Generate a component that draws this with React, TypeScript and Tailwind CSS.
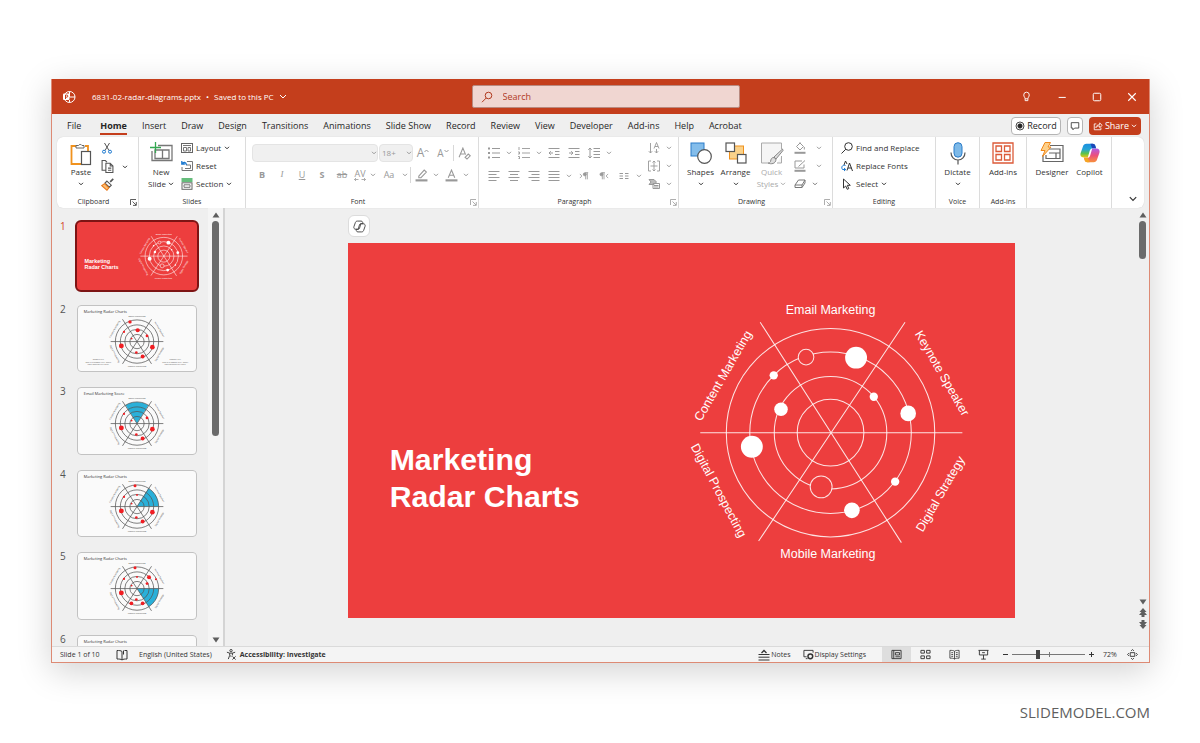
import { useState } from "react";
import type { ReactNode } from "react";

const tabs = [
    "File", "Home", "Insert", "Draw", "Design", "Transitions", "Animations", "Slide Show",
    "Record", "Review", "View", "Developer", "Add-ins", "Help", "Acrobat",
];

type Dot = [number, number, number];

// dots are relative to the centre of the radar
const leftDots: Dot[] = [[-139, -103, 12], [-57, -32, 9], [-167, 46, 26], [-7, 117, 14]];
const thumbs: { title: string; dots: Dot[]; sector?: [number, number]; notes?: boolean }[] = [
    {
        title: "Marketing Radar Charts",
        dots: [...leftDots, [-75, -210, 18], [7, -121, 22], [107, -60, 15], [164, 60, 25], [60, 160, 21]],
        notes: true,
    },
    {
        title: "Email Marketing Score",
        dots: [...leftDots, [107, -60, 15], [164, 60, 25], [60, 160, 21]],
        sector: [-122, -58],
    },
    {
        title: "Marketing Radar Charts",
        dots: [...leftDots, [-21, -222, 16], [0, -124, 10], [164, 60, 25], [60, 160, 21]],
        sector: [-58, 0],
    },
    {
        title: "Marketing Radar Charts",
        dots: [...leftDots, [-21, -222, 16], [0, -124, 10], [128, -121, 21], [202, -100, 11], [107, -53, 15], [-60, 157, 20], [60, 157, 20]],
        sector: [0, 57],
    },
    { title: "Marketing Radar Charts", dots: leftDots },
];

function Icon({ size = 12, w, h, box, className = "", children }: { size?: number; w?: number; h?: number; box?: string; className?: string; children: ReactNode }) {
    return (
        <svg width={w ?? size} height={h ?? size} viewBox={box ?? "0 0 12 12"} fill="none" stroke="currentColor" strokeWidth="1" className={`shrink-0 ${className}`} aria-hidden="true">
            {children}
        </svg>
    );
}

function Chevron({ className = "" }: { className?: string }) {
    return (
        <Icon w={6} h={4} box="0 0 6 4" className={className}>
            <path d="M1 .8 3 2.8 5 .8" />
        </Icon>
    );
}

function Launcher() {
    return (
        <Icon size={7} box="0 0 7 7">
            <path d="M.5 6V.5H6M2.5 2.5l3.5 3.5M6.3 3v3.4H3" strokeWidth=".8" />
        </Icon>
    );
}

function Group({ label, width, launcher, muted, children }: { label: string; width: string; launcher?: boolean; muted?: boolean; children?: ReactNode }) {
    return (
        <section className={`${width} flex shrink-0 flex-col border-r border-[#dcdcdc]`} aria-label={label || "Designer"}>
            <div className="flex flex-1">{children}</div>
            <div className="flex h-3 items-center text-center text-[7px] leading-3 text-[#333]">
                <span className="flex-1">{label}</span>
                {launcher && (
                    <button aria-label={`${label} settings`} className={`w-2 ${muted ? "text-[#999]" : "text-[#333]"}`}>
                        <Launcher />
                    </button>
                )}
            </div>
        </section>
    );
}

function BigButton({ icon, lines, width, chevron, inlineChevron, muted }: { icon: ReactNode; lines: string[]; width: string; chevron?: boolean; inlineChevron?: boolean; muted?: boolean }) {
    return (
        <button disabled={muted} className={`${width} flex shrink-0 flex-col items-center pt-[5px] text-[8px] leading-3 ${muted ? "text-[#aaa]" : "text-[#333]"}`}>
            <span className="flex h-6 items-start justify-center">{icon}</span>
            {lines.map((line, i) => (
                <span key={line} className="flex items-center gap-0.5 whitespace-nowrap">
                    {line}
                    {inlineChevron && i === lines.length - 1 && <Chevron />}
                </span>
            ))}
            {chevron && <Chevron className="mt-1" />}
        </button>
    );
}

function SmallButton({ icon, label, chevron }: { icon: ReactNode; label: string; chevron?: boolean }) {
    return (
        <button className="flex h-[18px] items-center gap-[3px] whitespace-nowrap text-[8px] text-[#333]">
            <span className="flex w-3 justify-center">{icon}</span>
            {label}
            {chevron && <Chevron />}
        </button>
    );
}

function Tool({ label, width = "w-5", children }: { label: string; width?: string; children: ReactNode }) {
    return (
        <button aria-label={label} className={`${width} flex h-[18px] shrink-0 items-center justify-center`}>
            {children}
        </button>
    );
}

function More({ label }: { label: string }) {
    return (
        <button aria-label={`${label} options`} className="flex h-[18px] w-2.5 shrink-0 items-center justify-center">
            <Chevron />
        </button>
    );
}

function Lines({ d }: { d: string }) {
    return (
        <Icon size={12}>
            <path d={d} />
        </Icon>
    );
}

const copilotHalf = "M8 2h7c1.500 0 2.400.9 2.800 2.200l.8 2.500h-3.600c-1.700 0-2.700 1-3.200 2.600L9.600 17H5c-2.900 0-4-2.200-3.300-4.600l2.600-7.500C4.900 3 6.200 2 8 2z";

function CopilotColor() {
    return (
        <svg width="22" height="22" viewBox="0 0 24 24" aria-hidden="true">
            <defs>
                <linearGradient id="cp-a" x1="0" y1="0" x2="0" y2="1">
                    <stop offset="0" stopColor="#1b8fe0" />
                    <stop offset=".4" stopColor="#25a4d6" />
                    <stop offset=".7" stopColor="#5cc24c" />
                    <stop offset="1" stopColor="#f2c811" />
                </linearGradient>
                <linearGradient id="cp-b" x1="0" y1="0" x2="0" y2="1">
                    <stop offset="0" stopColor="#f7903c" />
                    <stop offset=".5" stopColor="#ec4f7d" />
                    <stop offset="1" stopColor="#b05be8" />
                </linearGradient>
            </defs>
            <path d={copilotHalf} fill="url(#cp-a)" />
            <path d={copilotHalf} fill="url(#cp-b)" transform="rotate(180 12 12)" />
            <path d="M12.500 2H15c1.500 0 2.400.9 2.800 2.200l.8 2.500h-4.300z" fill="#1a47b8" />
            <path d="M11.500 22H9c-1.500 0-2.400-.9-2.800-2.200l-.8-2.500h4.300z" fill="#f5a623" />
        </svg>
    );
}

function CopilotOutline() {
    return (
        <svg width="13" height="13" viewBox="0 0 24 24" fill="none" stroke="#444" strokeWidth="1.7" aria-hidden="true">
            <path d={copilotHalf} />
            <path d={copilotHalf} transform="rotate(180 12 12)" />
        </svg>
    );
}

function CoverSlide({ stroke = 2 }: { stroke?: number }) {
    return (
        <svg viewBox="0 0 1280 720" className="block w-full bg-[#ed3e3e] font-['Liberation_Sans',Arial,sans-serif]" role="img" aria-label="Marketing Radar Charts">
            <g fontSize="58" fontWeight="700" fill="#fff">
                <text x="80" y="436">Marketing</text>
                <text x="80" y="506">Radar Charts</text>
            </g>
            <g fill="none" stroke="#fff" strokeWidth={stroke} strokeOpacity=".85">
                <circle cx="926" cy="364" r="200" />
                <circle cx="926" cy="364" r="155" />
                <circle cx="926" cy="364" r="108" />
                <circle cx="926" cy="364" r="64" />
                <path d="M676 364h503M791 152l271 423M1069 152 788 572" />
                <circle cx="879" cy="219" r="15" fill="#ed3e3e" />
                <circle cx="908" cy="468" r="21" fill="#ed3e3e" />
            </g>
            <g fill="#fff">
                <circle cx="975" cy="220" r="21" />
                <circle cx="817" cy="254" r="8" />
                <circle cx="1009" cy="295" r="8" />
                <circle cx="831" cy="319" r="13" />
                <circle cx="1075" cy="327" r="15" />
                <circle cx="775" cy="391" r="21" />
                <circle cx="1050" cy="458" r="8" />
                <circle cx="967" cy="513" r="15" />
            </g>
            <g fontSize="24" fill="#fff" textAnchor="middle">
                <text x="926" y="136">Email Marketing</text>
                <text x="921" y="605">Mobile Marketing</text>
                <text transform="translate(720 255) rotate(-60)" dominantBaseline="central">Content Marketing</text>
                <text transform="translate(1140 250) rotate(60)" dominantBaseline="central">Keynote Speaker</text>
                <text transform="translate(1137 482) rotate(-60)" dominantBaseline="central">Digital Strategy</text>
                <text transform="translate(711 475) rotate(62)" dominantBaseline="central">Digital Prospecting</text>
            </g>
        </svg>
    );
}

function RadarThumb({ title, dots, sector, notes }: (typeof thumbs)[number]) {
    const point = (deg: number) => {
        const a = (deg * Math.PI) / 180;
        return `${Math.round(231 * Math.cos(a))} ${Math.round(231 * Math.sin(a))}`;
    };
    return (
        <svg viewBox="0 0 1280 720" className="block w-full bg-[#fafafa] font-['Open_Sans',sans-serif]" role="img" aria-label={title}>
            <text x="72" y="84" fontSize="42" fill="#333">{title}</text>
            <g transform="translate(640 390)">
                {sector && <path d={`M0 0 L${point(sector[0])} A231 231 0 0 1 ${point(sector[1])}Z`} fill="#2ab0d9" />}
                <g fill="none" stroke="#555" strokeWidth="8">
                    <circle r="231" />
                    <circle r="178" />
                    <circle r="130" />
                    <circle r="76" />
                    <path d="M-281 0H281M-155-238 155 238M155-238-155 238" />
                </g>
                {dots.map(([x, y, r]) => (
                    <circle key={`${x},${y}`} cx={x} cy={y} r={r} fill="#f01e23" />
                ))}
                <g fontSize="24" fill="#444" textAnchor="middle">
                    <text y="-262">Email Marketing</text>
                    <text y="272">Mobile Marketing</text>
                    <text transform="translate(-232 -128) rotate(-60)">Content Marketing</text>
                    <text transform="translate(232 -128) rotate(60)">Keynote Speaker</text>
                    <text transform="translate(245 140) rotate(-60)">Digital Strategy</text>
                    <text transform="translate(-245 134) rotate(62)">Digital Prospecting</text>
                </g>
            </g>
            {notes && [228, 1048].map((x) => (
                <g key={x} fontSize="22" fill="#555" textAnchor="middle">
                    <text x={x} y="590">Sample text</text>
                    <text x={x} y="618">This is a sample text. Insert</text>
                    <text x={x} y="644">your desired text here.</text>
                </g>
            ))}
        </svg>
    );
}

function TitleBar() {
    return (
        <header className="grid h-[35px] shrink-0 grid-cols-[1fr_268px_1fr] items-center bg-[#c43e1c] pl-[10px] text-white">
            <div className="flex items-center text-[8px]">
                <Icon size={14} box="0 0 14 14" className="mr-4">
                    <circle cx="7.5" cy="7" r="5.5" />
                    <path d="M7.5 1.5V7H13M7.5 12.5V10" />
                    <rect x="1" y="3.500" width="6.500" height="6.500" rx="1" fill="#fff" stroke="none" />
                    <path d="M3.5 9V5h1.200a1 1 0 0 1 0 2.200H3.5" stroke="#c43e1c" />
                </Icon>
                <button className="flex items-center gap-[5px] whitespace-nowrap">
                    6831-02-radar-diagrams.pptx <span>•</span> Saved to this PC
                    <Icon w={8} h={5} box="0 0 8 5"><path d="M1 1l3 3 3-3" /></Icon>
                </button>
            </div>
            <label className="flex h-[23px] items-center gap-2.5 rounded-xs border border-[#b98a80] bg-[#f0d6d1] pl-2 text-[#b03a1f]">
                <Icon size={12}>
                    <circle cx="7.5" cy="4.500" r="3.300" />
                    <path d="M5.2 7 1 11.2" />
                </Icon>
                <input aria-label="Search" placeholder="Search" className="w-full bg-transparent text-[9px] outline-none placeholder:text-[#b03a1f]" />
            </label>
            <div className="flex items-center justify-end">
                <button aria-label="Tips" className="flex w-[35px] justify-center">
                    <Icon size={11}><path d="M4.5 8.5C4.5 7 3 6.3 3 4.3a3 3 0 0 1 6 0c0 2-1.5 2.7-1.5 4.2zM4.5 8.5v2h3v-2" /></Icon>
                </button>
                <button aria-label="Minimize" className="flex w-[35px] justify-center">
                    <Icon size={10}><path d="M2 6.5h8.5" strokeWidth="1.2" /></Icon>
                </button>
                <button aria-label="Maximize" className="flex w-[35px] justify-center">
                    <Icon size={10}><rect x="1.5" y="1.5" width="9" height="9" rx="1.5" strokeWidth="1.2" /></Icon>
                </button>
                <button aria-label="Close" className="flex w-[35px] justify-center">
                    <Icon size={10}><path d="M1.5 1.5l9 9M10.5 1.5l-9 9" strokeWidth="1.3" /></Icon>
                </button>
            </div>
        </header>
    );
}

function TabBar() {
    const [active, setActive] = useState("Home");
    return (
        <nav className="flex h-[23px] shrink-0 items-center justify-between pr-2 pl-[15px]">
            <div className="flex gap-[15px] pt-0.5 text-[9px] text-[#262626]">
                {tabs.map((tab) => (
                    <button
                        key={tab}
                        onClick={() => setActive(tab)}
                        className={`border-b-2 whitespace-nowrap leading-[14px] first:mr-1 ${tab === active ? "border-[#c43e1c] font-bold" : "border-transparent"}`}
                    >
                        {tab}
                    </button>
                ))}
            </div>
            <div className="flex gap-1.5 text-[9px]">
                <button className="flex h-[18px] w-[50px] items-center justify-center gap-0.5 rounded-sm border border-[#b5b5b5] bg-white text-[#262626]">
                    <Icon size={10}>
                        <circle cx="6" cy="6" r="4.8" />
                        <circle cx="6" cy="6" r="2.6" fill="currentColor" />
                    </Icon>
                    Record
                </button>
                <button aria-label="Comments" className="flex h-[18px] w-4 items-center justify-center rounded-sm border border-[#b5b5b5] bg-white text-[#333]">
                    <Icon size={10}><path d="M1.5 2h9v6.5H5.5L3.5 10.5v-2h-2z" /></Icon>
                </button>
                <button className="flex h-[18px] w-[52px] items-center justify-center gap-0.5 rounded-sm bg-[#c43e1c] text-white">
                    <Icon size={10}><path d="M4 3.5H1.5v7h8V8M3.5 8c.3-2.5 2-3.5 4.5-3.5V2.2L11 5.3 8 8V6C6 6 4.5 6.5 3.5 8z" /></Icon>
                    Share
                    <Chevron />
                </button>
            </div>
        </nav>
    );
}

function Ribbon() {
    return (
        <div className="mx-[5px] flex h-[71px] shrink-0 rounded-md bg-white shadow-[0_0_1px_rgba(0,0,0,0.2)]">
            <Group label="Clipboard" width="w-[82px]" launcher>
                <div className="w-2" />
                <BigButton width="w-8" lines={["Paste"]} chevron icon={
                    <Icon w={22} h={24} box="0 0 22 24">
                        <path d="M6 4H1.5v18H11M15 4h3v5" stroke="#f0921e" strokeWidth="1.8" />
                        <path d="M6 6V3.5h2.5a2 2 0 0 1 3.5 0H14V6z" stroke="#666" fill="#fff" />
                        <rect x="11.5" y="9.5" width="9" height="13" stroke="#555" fill="#fff" strokeWidth="1.2" />
                    </Icon>
                } />
                <div className="flex w-5 flex-col items-center pt-[2px] text-[#555]">
                    <Tool label="Cut">
                        <Icon size={12}>
                            <path d="M3.5 1 8 8.5M8.5 1 4 8.5" />
                            <circle cx="3" cy="9.7" r="1.5" stroke="#1a78d0" />
                            <circle cx="9" cy="9.7" r="1.5" stroke="#1a78d0" />
                        </Icon>
                    </Tool>
                    <Tool label="Copy">
                        <Icon size={13}><path d="M4.5 9.5H1v-9h3L5.5 2M4.5 3h4L11 5.5v6H4.5zM8.5 3v2.5H11M6.5 7.5h3M6.5 9.5h3" /></Icon>
                    </Tool>
                    <Tool label="Format Painter">
                        <Icon size={13}>
                            <path d="M11.3.8 8.5 3.600" stroke="#555" strokeWidth="1.5" />
                            <path d="M5.500 2.800 9.500 6.600 7.700 8.500 3.700 4.700z" fill="#fff" stroke="#555" />
                            <path d="M3.300 5.200 7.300 9 5.500 11.300 .7 7z" fill="#fbbf77" stroke="#e8791a" />
                        </Icon>
                    </Tool>
                </div>
                <div className="flex w-4 items-center justify-center text-[#333]"><More label="Copy" /></div>
            </Group>

            <Group label="Slides" width="w-[107px]">
                <div className="w-1" />
                <BigButton width="w-[36px]" lines={["New", "Slide"]} inlineChevron icon={
                    <Icon w={23} h={20} box="0 0 23 20">
                        <path d="M8 3.5h14v15H2V9M5 8h14v8.500H5zM12.5 8v8" stroke="#777" strokeWidth="1.3" />
                        <path d="M5.5 0v11M0 5.5h11" stroke="#35a852" strokeWidth="1.3" />
                    </Icon>
                } />
                <div className="flex flex-col pt-[2px] pl-0.5 text-[#555]">
                    <SmallButton label="Layout" chevron icon={
                        <Icon size={12}><rect x=".5" y="1.5" width="11" height="9" stroke="#666" /><path d="M2 3.5h8M2.5 5.5h3V9h-3zM7 5.5h2.5V9H7z" stroke="#777" /></Icon>
                    } />
                    <SmallButton label="Reset" icon={
                        <Icon size={12}><path d="M6 1.5h5.5v9H1V7M5 5h4.5v3.5H4" stroke="#777" /><path d="M.8 1v3h3M1 3.8C2.5 1.5 5 2 5.5 5" stroke="#1a78d0" strokeWidth="1.3" /></Icon>
                    } />
                    <SmallButton label="Section" chevron icon={
                        <Icon size={12}><path d="M.5 1h11M.5 3h11" stroke="#35a852" strokeWidth="1.6" /><rect x="1" y="4.8" width="10" height="6.5" stroke="#666" /><path d="M3 6.8h6v2.5H3z" stroke="#777" /></Icon>
                    } />
                </div>
            </Group>

            <Group label="Font" width="w-[233px]" launcher muted>
                <div className="flex flex-col gap-1 pt-[7px] pl-1.5 text-[#999]">
                    <div className="flex items-center">
                        <div className="grid items-center">
                            <select disabled aria-label="Font name" className="col-start-1 row-start-1 h-[18px] w-[126px] appearance-none rounded-sm border border-[#e4e4e4] bg-[#f0f0f0]" />
                            <Chevron className="col-start-1 row-start-1 mr-px justify-self-end" />
                        </div>
                        <div className="ml-px grid items-center">
                            <select disabled aria-label="Font size" className="col-start-1 row-start-1 h-[18px] w-[34px] appearance-none rounded-sm border border-[#e4e4e4] bg-[#f0f0f0] pl-0.5 text-[8px]">
                                <option>18+</option>
                            </select>
                            <Chevron className="col-start-1 row-start-1 mr-px justify-self-end" />
                        </div>
                        <Tool label="Increase font size"><span className="text-[12px] leading-none">A</span><Icon w={5} h={9} box="0 0 5 9"><path d="M.5 3 2.5 1l2 2" /></Icon></Tool>
                        <Tool label="Decrease font size"><span className="text-[10px] leading-none">A</span><Icon w={5} h={9} box="0 0 5 9"><path d="M.5 1 2.5 3l2-2" /></Icon></Tool>
                        <div className="h-4 w-px bg-[#d8d8d8]" />
                        <Tool label="Clear formatting">
                            <Icon size={13}><path d="M1 9.5 4.5 1 7 7M2.2 6.5h4M6.5 9.5l3-3 1.8 1.6-3 3z" /></Icon>
                        </Tool>
                    </div>
                    <div className="flex items-center text-[9px]">
                        <Tool label="Bold"><b>B</b></Tool>
                        <Tool label="Italic"><i className="font-['Liberation_Serif',serif]">I</i></Tool>
                        <Tool label="Underline"><u>U</u></Tool>
                        <Tool label="Text shadow"><b>S</b></Tool>
                        <Tool label="Strikethrough"><s>ab</s></Tool>
                        <Tool label="Character spacing" width="w-4">
                            <span className="flex flex-col items-center leading-[9px]">AV<Icon w={12} h={3} box="0 0 12 3"><path d="M2 0 .5 1.5 2 3M.5 1.5h4M10 0l1.5 1.5L10 3M11.5 1.5h-4" strokeWidth=".8" /></Icon></span>
                        </Tool>
                        <More label="Character spacing" />
                        <Tool label="Change case" width="w-[22px]">Aa</Tool>
                        <More label="Change case" />
                        <div className="h-4 w-px bg-[#d8d8d8]" />
                        <Tool label="Highlight">
                            <Icon size={13}><path d="M3.5 6.5 8.500 1l2 1.800L5.500 8H3.5z" /><path d="M.5 10.5h11" strokeWidth="2" /></Icon>
                        </Tool>
                        <More label="Highlight" />
                        <Tool label="Font color">
                            <Icon size={13}><path d="M3 8 6 1l3 7M4 5.8h4" /><path d="M.5 10.5h11" strokeWidth="2" /></Icon>
                        </Tool>
                        <More label="Font color" />
                    </div>
                </div>
            </Group>

            <Group label="Paragraph" width="w-[200px]" launcher muted>
                <div className="flex flex-1 flex-col gap-[5px] pt-[7px] pl-[5px] text-[#999]">
                    <div className="flex">
                        <Tool label="Bullets"><Icon size={12}><path d="M4 1.5h8M4 6h8M4 10.5h8" /><path d="M0 1.5h2M0 6h2M0 10.5h2" strokeWidth="2" /></Icon></Tool>
                        <More label="Bullets" />
                        <Tool label="Numbering"><Icon size={12}><path d="M4 1.5h8M4 6h8M4 10.5h8M1 0v3M0 5h1.5v2H0M0 9.5h1.5V12H0" strokeWidth=".9" /></Icon></Tool>
                        <More label="Numbering" />
                        <Tool label="Decrease indent"><Lines d="M.5 1.5h11M7 4.5h4.5M7 7.5h4.5M.5 10.5h11M5 6H1M2.8 4.2 1 6l1.8 1.8" /></Tool>
                        <Tool label="Increase indent"><Lines d="M.5 1.5h11M7 4.5h4.5M7 7.5h4.5M.5 10.5h11M1 6h4M3.2 4.2 5 6 3.2 7.8" /></Tool>
                        <Tool label="Line spacing"><Lines d="M5.5 1.5H12M5.5 4.5H12M5.5 7.5H12M5.5 10.5H12M2 1v10M.3 2.8 2 1l1.7 1.8M.3 9.2 2 11l1.7-1.8" /></Tool>
                        <More label="Line spacing" />
                    </div>
                    <div className="flex">
                        <Tool label="Align left"><Lines d="M.5 1.5h11M.5 4.5h8M.5 7.5h11M.5 10.5h8" /></Tool>
                        <Tool label="Center"><Lines d="M.5 1.5h11M2 4.5h8M.5 7.5h11M2 10.5h8" /></Tool>
                        <Tool label="Align right"><Lines d="M.5 1.5h11M3.5 4.5h8M.5 7.5h11M3.5 10.5h8" /></Tool>
                        <Tool label="Justify"><Lines d="M.5 1.5h11M.5 4.5h11M.5 7.5h11M.5 10.5h11" /></Tool>
                        <More label="Justify" />
                        <Tool label="Left to right"><Icon size={10}><path d="M1 3.5 3.5 6 1 8.5M8 2v8M10 2v8M11 2H7.5" /><circle cx="7" cy="4" r="1.8" fill="currentColor" /></Icon></Tool>
                        <Tool label="Right to left"><Icon size={10}><path d="M11 3.5 8.5 6 11 8.5M4 2v8M6 2v8M7 2H3.5" /><circle cx="3" cy="4" r="1.8" fill="currentColor" /></Icon></Tool>
                        <Tool label="Columns"><Lines d="M1.5 3.5H5M1.5 6H5M1.5 8.5H5M7 3.5h3.5M7 6h3.500M7 8.5h3.5" /></Tool>
                        <More label="Columns" />
                    </div>
                </div>
                <div className="flex w-[36px] flex-col pt-[2px] text-[#999]">
                    <div className="flex">
                        <Tool label="Text direction"><Icon size={12}><path d="M2.5 1v10M.8 9.2l1.7 1.8 1.7-1.8M8.5 7v4M6.8 9.2l1.7 1.8 1.7-1.8M6 6.5l2.5-6 2.5 6M7 4.5h3" strokeWidth=".9" /></Icon></Tool>
                        <More label="Text direction" />
                    </div>
                    <div className="flex">
                        <Tool label="Align text"><Icon size={12}><path d="M3 1H.5v10H3M9 1h2.5v10H9M2.5 6h7M6 1v10M4.5 2.5 6 1l1.5 1.5M4.5 9.5 6 11l1.5-1.5" strokeWidth=".9" /></Icon></Tool>
                        <More label="Align text" />
                    </div>
                    <div className="flex">
                        <Tool label="Convert to SmartArt"><Icon size={12}><path d="M1 1.5h5L8.5 4 6 6.5H1L3 4z" fill="#bbb" /><path d="M5 5.5h6.5v5H5zM6 7.5h4.5M6 9h4.5" /></Icon></Tool>
                        <More label="Convert to SmartArt" />
                    </div>
                </div>
            </Group>

            <Group label="Drawing" width="w-[154px]" launcher muted>
                <div className="w-1" />
                <BigButton width="w-[35px]" lines={["Shapes"]} chevron icon={
                    <Icon size={22} box="0 0 22 22">
                        <rect x="1" y="1" width="13" height="13" fill="#83bdeb" stroke="#2b7cc9" />
                        <circle cx="14.5" cy="14.5" r="6.800" fill="#fff" stroke="#555" strokeWidth="1.2" />
                    </Icon>
                } />
                <BigButton width="w-[35px]" lines={["Arrange"]} chevron icon={
                    <Icon size={22} box="0 0 22 22">
                        <rect x="4.5" y="4" width="14" height="13" fill="#fbd28a" stroke="#f0921e" />
                        <rect x="1" y="1" width="8.5" height="8.5" fill="#fff" stroke="#555" strokeWidth="1.2" />
                        <rect x="12.5" y="12.5" width="8.5" height="8.5" fill="#fff" stroke="#555" strokeWidth="1.2" />
                    </Icon>
                } />
                <BigButton width="w-[37px]" lines={["Quick", "Styles"]} inlineChevron muted icon={
                    <Icon w={24} h={23} box="0 0 24 23">
                        <path d="M8 21H1.5V1h20v6M21.5 14v7H17" fill="#f5f5f5" stroke="#aaa" />
                        <path d="M22.5 7 14 15l2 2 7-8.5zM14 15.5c-2.5 0-3 1.5-3.500 4-.3 1-1.5 1.5-2.5 1.5 3 1.5 8 1 8-4z" fill="#ddd" stroke="#888" />
                    </Icon>
                } />
                <div className="flex flex-col pt-[2px] text-[#999]">
                    <div className="flex">
                        <Tool label="Shape fill"><Icon size={12}><path d="M6 1 2.5 4.5 6 8l3.5-3.5zM6 1V.2M10.3 5v2.5" /><path d="M.5 10.8h11" strokeWidth="2" /></Icon></Tool>
                        <div className="w-1" />
                        <More label="Shape fill" />
                    </div>
                    <div className="flex">
                        <Tool label="Shape outline"><Icon size={12}><path d="M8 1H1v7h9V4.5M4.5 6.5 11 .5" /><path d="M.5 10.8h11" strokeWidth="2" /></Icon></Tool>
                        <div className="w-1" />
                        <More label="Shape outline" />
                    </div>
                    <div className="flex text-[#777]">
                        <Tool label="Shape effects"><Icon size={12}><path d="M4.5 2H11L8 7H1zM1 7v2.5h7L11 5V2M8 7v2.5" /></Icon></Tool>
                        <More label="Shape effects" />
                    </div>
                </div>
            </Group>

            <Group label="Editing" width="w-[103px]">
                <div className="flex flex-col pt-[2px] pl-2 text-[#444]">
                    <SmallButton label="Find and Replace" icon={<Icon size={12}><circle cx="7.5" cy="4.5" r="3.8" /><path d="M4.8 7.2.5 11.5" /></Icon>} />
                    <SmallButton label="Replace Fonts" icon={
                        <Icon size={12}><path d="M6 10.5 8.500 3l3 8M7 8h3.5M3 5l1.5-4L6 4" /><path d="M4.5 5.5C1 4.5 0 7.5 1.5 9.5h3M3 8l1.7 1.5L3 11" stroke="#1a78d0" /></Icon>
                    } />
                    <SmallButton label="Select" chevron icon={<Icon size={12}><path d="M2.5 1v9l2.2-2 1.5 3.3 1.6-.7L6.3 7.3h3z" /></Icon>} />
                </div>
            </Group>

            <Group label="Voice" width="w-[44px]">
                <BigButton width="w-full" lines={["Dictate"]} chevron icon={
                    <Icon w={16} h={23} box="0 0 16 23">
                        <rect x="4" y=".7" width="8" height="14.5" rx="4" fill="#7db9e8" stroke="#2b7cc9" />
                        <path d="M1 10.5c0 4.5 3 7.5 7 7.5s7-3 7-7.5M8 18v4.5" stroke="#555" strokeWidth="1.2" />
                    </Icon>
                } />
            </Group>

            <Group label="Add-ins" width="w-[47px]">
                <BigButton width="w-full" lines={["Add-ins"]} icon={
                    <Icon size={22} box="0 0 22 22">
                        <path d="M1 1h20v20H1zM4 4h5.5v5.5H4zM12.5 4H18v5.5h-5.5zM4 12.5h5.5V18H4zM12.5 12.5H18V18h-5.5z" stroke="#dc5a38" strokeWidth="1.3" />
                    </Icon>
                } />
            </Group>

            <Group label="" width="w-[85px]">
                <div className="w-1.5" />
                <BigButton width="w-[38px]" lines={["Designer"]} icon={
                    <Icon w={24} h={22} box="0 0 24 22">
                        <path d="M10 3.5h13v16H3V13M9 7h11v9.5H6V13M9 11h11M16 11v5.5" stroke="#666" strokeWidth="1.2" />
                        <path d="M5 .5h5.5L8 5h3L2.5 14.5 5 8.5H1z" fill="#fdd08a" stroke="#f0881a" />
                    </Icon>
                } />
                <BigButton width="w-[37px]" lines={["Copilot"]} icon={<CopilotColor />} />
            </Group>

            <div className="flex flex-1 items-end justify-end pr-[7px] pb-1.5">
                <button aria-label="Collapse ribbon" className="text-[#333]">
                    <Icon w={8} h={6} box="0 0 8 6"><path d="M.8 1.2 4 4.4l3.2-3.2" strokeWidth="1.2" /></Icon>
                </button>
            </div>
        </div>
    );
}

function Arrow({ down, double }: { down?: boolean; double?: boolean }) {
    return (
        <svg width="8" height={double ? 9 : 6} viewBox={double ? "0 0 8 9" : "0 0 8 6"} fill="#5e5e5e" className={down ? "rotate-180" : ""} aria-hidden="true">
            <path d={double ? "M4 0 7.5 4h-2L8 7H5.500v2h-3V7H0l2.500-3h-2z" : "M4 .5 7.5 5.5h-7z"} />
        </svg>
    );
}

function SlideList() {
    return (
        <aside className="flex w-[173px] shrink-0 border-r-2 border-[#d4d4d4]">
            <ol className="flex flex-1 flex-col gap-[15px] overflow-y-auto pt-[14px] pl-2 text-[10px] leading-[9px] text-[#555] [scrollbar-width:none]">
                <li className="flex shrink-0">
                    <span className="w-[17px] text-[#d24726]">1</span>
                    <button className="w-[120px] rounded-sm outline-2 outline-[#7d1414]"><CoverSlide stroke={7} /></button>
                </li>
                {thumbs.map((thumb, i) => (
                    <li key={i} className="flex shrink-0">
                        <span className="w-[17px]">{i + 2}</span>
                        <button className="w-[120px] overflow-hidden rounded-sm outline-1 -outline-offset-1 outline-[#c2c2c2]"><RadarThumb {...thumb} /></button>
                    </li>
                ))}
            </ol>
            <div className="flex w-[15px] flex-col items-center gap-[3px] bg-[#f5f5f5] pt-1 pb-[3px]">
                <button aria-label="Scroll slides up"><Arrow /></button>
                <div className="flex w-[7px] flex-1 flex-col">
                    <div className="h-[52%] rounded-full bg-[#6b6b6b]" />
                </div>
                <button aria-label="Scroll slides down"><Arrow down /></button>
            </div>
        </aside>
    );
}

function StatusBar() {
    const [zoom, setZoom] = useState(72);
    return (
        <footer className="flex h-4 shrink-0 items-center border-t border-[#dadada] bg-[#f4f4f4] text-[7px] leading-[15px] whitespace-nowrap text-[#333]">
            <span className="w-[64px] pl-2">Slide 1 of 10</span>
            <button aria-label="Proofing" className="mr-[11px]">
                <Icon size={12}><path d="M6 2.5C5 1.5 3 1.5 1 1.5V10c2 0 4 0 5 1 1-1 3-1 5-1V1.5H8.5M6 2.5V11M7.5 1.5v4" /></Icon>
            </button>
            <button className="mr-[14px]">English (United States)</button>
            <button className="flex items-center gap-[3px] font-bold">
                <Icon size={11}>
                    <circle cx="5.5" cy="1.8" r="1.3" />
                    <path d="M1 3.5l3 1v2.5L2.5 11M10 3.5l-3 1V7M4 4.5h3M4.500 7.5 6 8M7 8l3.5 3.5M10.5 8 7 11.5" />
                </Icon>
                Accessibility: Investigate
            </button>
            <div className="flex-1" />
            <button className="mr-3 flex items-center gap-px">
                <Icon size={12}><path d="M.5 5.5h11M.5 8.2h11M.5 11h11" /><path d="M3.5 4 6 1.5 8.5 4" strokeWidth="1.3" /></Icon>
                Notes
            </button>
            <button className="mr-4 flex items-center gap-px">
                <Icon size={11}><path d="M4 8.5H1v-7h10V4M3 10.5h2" /><circle cx="8" cy="8" r="2.6" strokeWidth="1.6" /></Icon>
                Display Settings
            </button>
            <button aria-label="Normal view" className="flex h-[15px] w-[29px] items-center justify-center bg-[#dedede]">
                <Icon size={11}><path d="M1 1.5h10v9H1zM3 1.5v9M4.8 4h4.5v2.5H4.8zM4.8 8.5h5" /></Icon>
            </button>
            <button aria-label="Slide sorter" className="flex w-[29px] justify-center">
                <Icon size={11}><path d="M1 1.5h3.8v3H1zM7.2 1.5H11v3H7.2zM1 7.5h3.8v3H1zM7.2 7.5H11v3H7.2z" /></Icon>
            </button>
            <button aria-label="Reading view" className="flex w-[29px] justify-center">
                <Icon size={11}><path d="M6 2.5C5 1.5 3 1.5 1 1.5V10c2 0 4 0 5 1 1-1 3-1 5-1V1.5c-2 0-4 0-5 1zM6 2.5V11M2.5 4h2M2.5 6h2M2.5 8h2M7.5 4h2M7.5 6h2M7.5 8h2" strokeWidth=".9" /></Icon>
            </button>
            <button aria-label="Slide show" className="flex w-[29px] justify-center">
                <Icon size={11}><path d="M.5 1.5h11M1.5 1.5v5h9v-5M6 6.5V11M3.5 11h5M4.5 4h3" /></Icon>
            </button>
            <button aria-label="Zoom out" className="ml-1"><Icon w={7} h={7} box="0 0 7 7"><path d="M1 3.5h5" /></Icon></button>
            <div className="relative mx-[3px] flex h-3 w-[73px] items-center">
                <span className="absolute left-1/2 h-[5px] w-px bg-[#777]" />
                <input
                    type="range"
                    aria-label="Zoom"
                    min="10"
                    max="192"
                    value={zoom}
                    onChange={(e) => setZoom(Number(e.target.value))}
                    className="h-3 w-full appearance-none bg-transparent bg-[linear-gradient(#777,#777)] bg-[length:100%_1px] bg-center bg-no-repeat [&::-webkit-slider-thumb]:h-[9px] [&::-webkit-slider-thumb]:w-[4px] [&::-webkit-slider-thumb]:appearance-none [&::-webkit-slider-thumb]:bg-[#444]"
                />
            </div>
            <button aria-label="Zoom in" className="mr-2"><Icon w={7} h={7} box="0 0 7 7"><path d="M1 3.5h5M3.5 1v5" /></Icon></button>
            <span className="w-6">{zoom}%</span>
            <button aria-label="Fit to window" className="mr-[11px]">
                <Icon size={11}><path d="M3.5 4h5v4h-5zM4.5 2 6 .6 7.5 2M4.5 10 6 11.4 7.5 10M2 4.5.6 6 2 7.5M10 4.5 11.4 6 10 7.5" /></Icon>
            </button>
        </footer>
    );
}

export default function App() {
    return (
        <div className="flex h-screen flex-col bg-white pt-[79px] pr-[50px] pl-[51px] font-['Open_Sans','Noto_Sans',sans-serif]">
            <div className="flex min-h-0 flex-1 flex-col border border-t-0 border-[#dd8a74] bg-[#efefef] shadow-[0_8px_32px_rgba(0,0,0,0.18)]">
                <TitleBar />
                <TabBar />
                <Ribbon />
                <div className="flex min-h-0 flex-1">
                    <SlideList />
                    <main className="flex min-w-0 flex-1 flex-col gap-1.5 overflow-hidden pt-[7px] pr-[121px] pl-[123px]">
                        <button aria-label="Copilot" className="flex size-[22px] shrink-0 items-center justify-center rounded-md border border-[#dcdcdc] bg-white">
                            <CopilotOutline />
                        </button>
                        <CoverSlide />
                    </main>
                    <div className="flex w-[13px] shrink-0 flex-col items-center gap-[3px] pt-1 pb-[17px]">
                        <button aria-label="Previous"><Arrow /></button>
                        <div className="flex w-[7px] flex-1 flex-col">
                            <div className="h-[38px] rounded-full bg-[#6b6b6b]" />
                        </div>
                        <button aria-label="Next"><Arrow down /></button>
                        <button aria-label="Previous slide"><Arrow double /></button>
                        <button aria-label="Next slide"><Arrow down double /></button>
                    </div>
                </div>
                <StatusBar />
            </div>
            <div className="h-20 shrink-0 pt-[38px] text-right text-[15px] text-[#5f5f5f]">
                <a href="#">SLIDEMODEL.COM</a>
            </div>
        </div>
    );
}
